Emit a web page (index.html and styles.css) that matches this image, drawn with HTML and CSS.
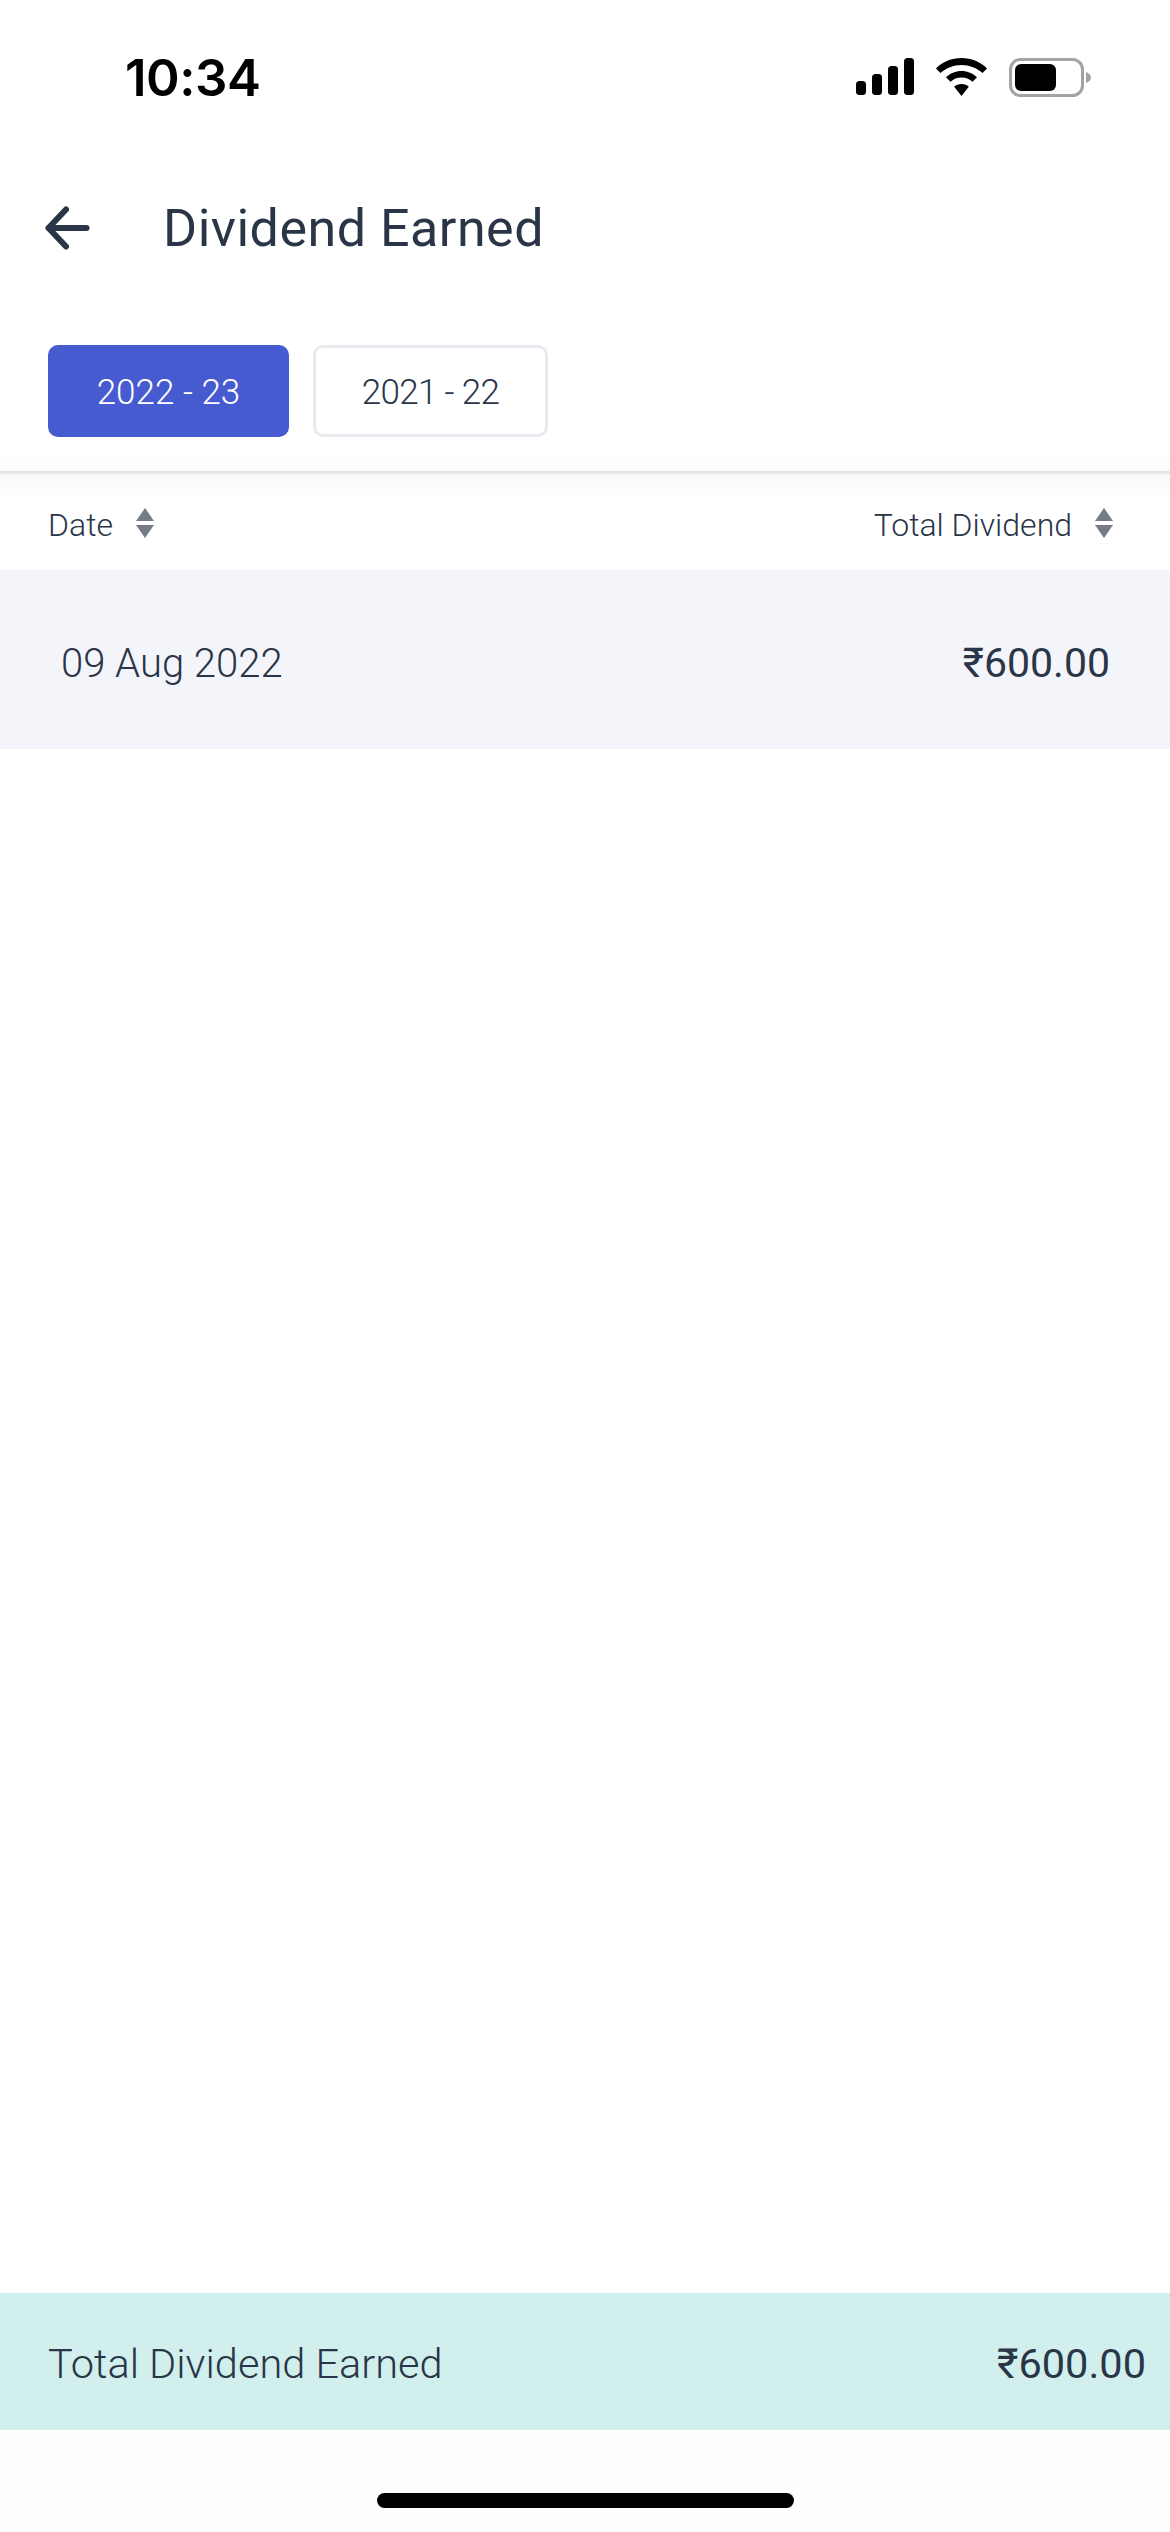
FILE: index.html
```html
<!DOCTYPE html>
<html lang="en">
<head>
<meta charset="utf-8">
<title>Dividend Earned</title>
<link rel="stylesheet" href="styles.css">
</head>
<body>
<div class="screen">
  <div class="status">
    <span class="time">10:34</span>
    <div class="status-icons">
      <svg class="signal" width="58" height="37" viewBox="0 0 58 37"><rect x="0" y="23" width="10" height="14" rx="3.5"/><rect x="16" y="16" width="10" height="21" rx="3.5"/><rect x="32" y="8" width="10" height="29" rx="3.5"/><rect x="48" y="0" width="10" height="37" rx="3.5"/></svg>
      <svg class="wifi" width="51" height="38" viewBox="0 0 51 38"><path d="M25.5 0C35.5 0 44.5 3.9 51 10.4L46.500 15C41 10 33.400 7 25.500 7S10 10 4.500 15L0 10.400C6.500 3.900 15.500 0 25.500 0Z"/><path d="M25.500 13C31.500 13 37 15.300 41 19.300L36.500 23.800C33.500 21 29.700 19.500 25.500 19.500S17.500 21 14.500 23.800L10 19.300C14 15.300 19.500 13 25.500 13Z"/><path d="M25.500 26C28.400 26 30.900 27 32.800 28.800L25.500 38L18.200 28.800C20.100 27 22.600 26 25.500 26Z"/></svg>
      <svg class="battery" width="82" height="39" viewBox="0 0 82 39"><rect x="1.500" y="1.500" width="72" height="36" rx="10" fill="none" stroke="#a3a3a3" stroke-width="3"/><rect x="6" y="6" width="41" height="27" rx="6" fill="#000"/><path d="M77 14C80 15 82 17 82 19.500S80 24 77 25Z" fill="#a3a3a3"/></svg>
    </div>
  </div>
  <header class="topbar">
    <svg class="back" width="45" height="44" viewBox="0 0 45 44"><path d="M21 3.500L3.500 22L21 40.500M3.500 22H41.500" fill="none" stroke="#2a3547" stroke-width="6" stroke-linecap="round" stroke-linejoin="round"/></svg>
    <h1 class="title">Dividend Earned</h1>
  </header>
  <div class="tabs">
    <button class="tab tab-active">2022 - 23</button>
    <button class="tab tab-idle">2021 - 22</button>
  </div>
  <div class="table-head">
    <div class="head-cell"><span class="head-text">Date</span>
      <svg class="sort" width="18" height="30" viewBox="0 0 18 30"><path d="M9 0L18 13H0ZM0 17H18L9 30Z" fill="#757b87"/></svg></div>
    <div class="head-cell"><span class="head-text">Total Dividend</span>
      <svg class="sort" width="18" height="30" viewBox="0 0 18 30"><path d="M9 0L18 13H0ZM0 17H18L9 30Z" fill="#757b87"/></svg></div>
  </div>
  <div class="row">
    <span class="row-date">09 Aug 2022</span>
    <span class="row-amount">₹600.00</span>
  </div>
  <div class="spacer"></div>
  <div class="total">
    <span class="total-label">Total Dividend Earned</span>
    <span class="total-amount">₹600.00</span>
  </div>
  <div class="home-area"><div class="home-bar"></div></div>
</div>
</body>
</html>
```
FILE: styles.css
```css
* { box-sizing: border-box; }
html, body { margin: 0; padding: 0; background: #fff; }
.screen {
  width: 1170px;
  height: 2532px;
  display: flex;
  flex-direction: column;
  font-family: Roboto, "Noto Sans", sans-serif;
  color: #2a3547;
  overflow: hidden;
}
.status {
  height: 150px;
  padding: 58px 79px 0 125px;
  display: flex;
  justify-content: space-between;
  align-items: flex-start;
}
.time {
  font-family: Inter, sans-serif;
  font-weight: 600;
  font-size: 51px;
  line-height: 40px;
  letter-spacing: -0.500px;
  color: #000;
}
.status-icons { display: flex; align-items: flex-start; gap: 22px; }
.topbar {
  height: 156px;
  padding-left: 45px;
  display: flex;
  align-items: center;
  gap: 73px;
}
.title {
  margin: 0;
  padding-top: 2px;
  font-size: 52px;
  font-weight: 400;
  line-height: 60px;
  letter-spacing: 0.500px;
}
.tabs {
  padding: 39px 0 34px 48px;
  display: flex;
  gap: 24px;
  background: linear-gradient(#fff 90%, #fafafa);
}
.tab {
  height: 92px;
  border-radius: 10px;
  font-family: inherit;
  font-size: 35px;
  font-weight: 300;
  padding: 2px 0 0;
}
.tab-active { width: 241px; background: #475bd1; border: 0; color: #fff; }
.tab-idle { width: 235px; background: #fff; border: 3px solid #e9e9f0; color: #2a3547; letter-spacing: -0.700px; }
.table-head {
  height: 99px;
  border-top: 3px solid #e4e4ea;
  background: linear-gradient(#f9f9fa, #fff 24px);
  padding: 2px 57px 0 48px;
  display: flex;
  justify-content: space-between;
  align-items: center;
}
.head-cell { display: flex; align-items: center; gap: 23px; font-size: 32px; font-weight: 300; line-height: 40px; }
.head-text { padding-top: 4px; }
.row {
  height: 179px;
  background: #f4f5fa;
  padding: 7px 60px 0 61px;
  display: flex;
  justify-content: space-between;
  align-items: center;
}
.row-date { font-size: 40px; font-weight: 300; }
.row-amount { font-size: 41px; font-weight: 400; }
.spacer { flex: 1; background: #fff; }
.total {
  height: 137px;
  background: #d1efed;
  padding: 3px 24px 0 48px;
  display: flex;
  justify-content: space-between;
  align-items: center;
}
.total-label { font-size: 41.500px; font-weight: 300; }
.total-amount { font-size: 41.500px; font-weight: 400; }
.home-area { height: 102px; padding-top: 63px; display: flex; justify-content: center; background: #fefefe; }
.home-bar { width: 417px; height: 15px; border-radius: 8px; background: #000; }
```
